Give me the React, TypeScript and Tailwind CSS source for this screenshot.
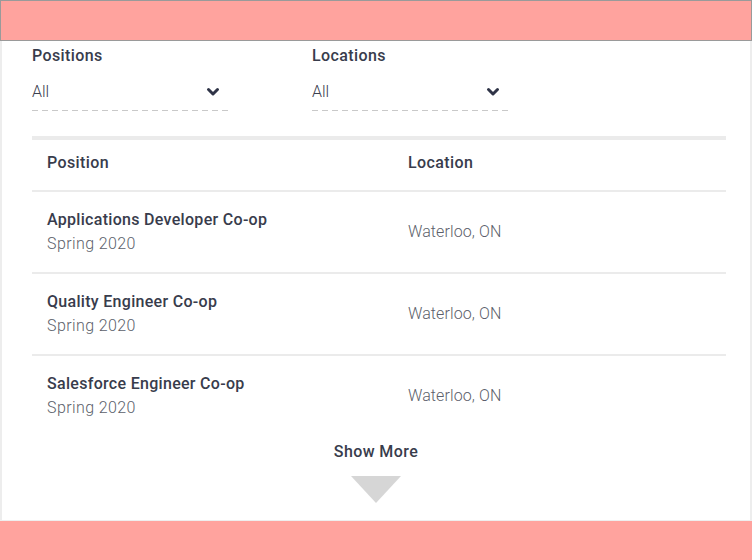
import React from 'react';

const jobs = [
  { title: 'Applications Developer Co-op', term: 'Spring 2020', location: 'Waterloo, ON' },
  { title: 'Quality Engineer Co-op', term: 'Spring 2020', location: 'Waterloo, ON' },
  { title: 'Salesforce Engineer Co-op', term: 'Spring 2020', location: 'Waterloo, ON' },
];

const Chevron = () => (
  <svg width="14" height="10" viewBox="0 0 14 10" className="text-[#2f3447]">
    <polyline points="2.5,2.5 7,7 11.5,2.5" fill="none" stroke="currentColor" strokeWidth="3" strokeLinecap="round" strokeLinejoin="round" />
  </svg>
);

const Filter = ({ label }: { label: string }) => (
  <div className="w-[198px]">
    <p className="text-[16px] leading-[24px] font-medium text-[#383c4c] tracking-[0.4px]">{label}</p>
    <div className="mt-[12px] flex items-center justify-between pr-[10px] pb-[6px]">
      <span className="text-[16px] leading-[24px] font-light text-[#3c4050]">All</span>
      <Chevron />
    </div>
    <div className="h-px bg-[repeating-linear-gradient(to_right,#c9c9c9_0,#c9c9c9_6px,transparent_6px,transparent_10px)]" />
  </div>
);

export default function App() {
  return (
    <div className="w-[752px] h-[560px] flex flex-col bg-white" style={{ fontFamily: 'Roboto, "Noto Sans", sans-serif' }}>
      <div className="h-[41px] shrink-0 bg-[#ffa39e] border border-[#9a9a9a]" />

      <div className="flex-1 flex flex-col border-l-2 border-r-2 border-[#ededed] pl-[30px] pr-[24px] pt-[3px]">
        <div className="flex gap-[82px]">
          <Filter label="Positions" />
          <Filter label="Locations" />
        </div>

        <div className="mt-[25px] border-t-[4px] border-[#ebebeb]">
          <div className="flex h-[52px] items-center pb-[4px] border-b-2 border-[#ebebeb] text-[16px] font-medium text-[#383c4c] tracking-[0.4px]">
            <span className="w-[376px] pl-[15px]">Position</span>
            <span>Location</span>
          </div>
          {jobs.map((job, i) => (
            <div
              key={job.title}
              className={`flex h-[82px] items-center border-b-2 ${i < jobs.length - 1 ? 'border-[#ebebeb]' : 'border-transparent'}`}
            >
              <div className="w-[376px] pl-[15px]">
                <p className="text-[16px] leading-[24px] font-medium text-[#383c4c] tracking-[0.3px]">{job.title}</p>
                <p className="text-[16px] leading-[24px] font-light text-[#5c5f6b] tracking-[0.4px]">{job.term}</p>
              </div>
              <span className="text-[16px] font-light text-[#5c5f6b] tracking-[0.1px]">{job.location}</span>
            </div>
          ))}
        </div>

        <div className="mt-[2px] pr-[6px] flex flex-col items-center">
          <span className="text-[16px] leading-[24px] font-medium text-[#383c4c] tracking-[0.4px]">Show More</span>
          <div className="mt-[12px] w-0 h-0 border-l-[25px] border-r-[25px] border-t-[27px] border-l-transparent border-r-transparent border-t-[#d6d6d6]" />
        </div>
      </div>

      <div className="h-[40px] shrink-0 bg-[#ffa39e] border-t border-[#eeeeee]" />
    </div>
  );
}
